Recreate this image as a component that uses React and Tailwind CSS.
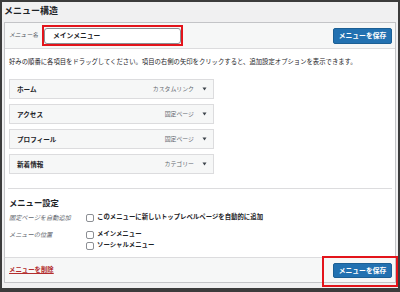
import React from 'react';

const items = [
  { label: 'ホーム', type: 'カスタムリンク' },
  { label: 'アクセス', type: '固定ページ' },
  { label: 'プロフィール', type: '固定ページ' },
  { label: '新着情報', type: 'カテゴリー' },
];

function Arrow() {
  return (
    <svg width="5" height="4" viewBox="0 0 5 4" className="shrink-0">
      <path d="M0.5 0.5 L4.5 0.5 L2.5 3.5 Z" fill="#3c434a" />
    </svg>
  );
}

function Check({ label }) {
  return (
    <label className="flex items-center gap-[3px] h-[11px]">
      <span className="w-[8px] h-[8px] rounded-[2px] border border-[#8c8f94] bg-white shrink-0" />
      <span className="text-[6.4px] font-bold text-[#1d2327] leading-none">{label}</span>
    </label>
  );
}

export default function App() {
  return (
    <div
      className="relative w-[400px] h-[292px] bg-[#f0f0f1] border-2 border-b-[4px] border-[#3c3c3c] flex flex-col"
      style={{ fontFamily: '"Noto Sans CJK JP", "Noto Sans", sans-serif' }}
    >
      {/* header */}
      <div className="h-[16px] flex items-center px-[2px] shrink-0">
        <h2 className="text-[9px] font-bold text-[#1d2327] leading-none">メニュー構造</h2>
      </div>

      <div className="mt-[4px] mx-[2px] mb-[5px] flex-1 flex flex-col border border-[#c3c4c7] bg-white">
        {/* menu name bar */}
        <div className="h-[26px] shrink-0 flex items-center justify-between bg-[#f6f7f7] border-b border-[#dcdcde] pl-[4px] pr-[3px]">
          <div className="flex items-center gap-[6px]">
            <span className="text-[5.8px] italic text-[#50575e]">メニュー名</span>
            <div className="relative w-[137px] h-[16px] rounded-[3px] border border-[#8c8f94] bg-white flex items-center px-[8px]">
              <span className="text-[6.8px] font-bold text-[#1d2327] leading-none">メインメニュー</span>
              <span className="absolute -left-[3px] -right-[3px] -top-[4px] -bottom-[3px] border-2 border-[#e3141b]" />
            </div>
          </div>
          <button className="w-[59px] h-[16px] rounded-[2px] bg-[#2271b1] border border-[#1c5f94] text-white text-[6.8px] font-bold leading-none">
            メニューを保存
          </button>
        </div>

        {/* body */}
        <div className="flex-1 flex flex-col pl-[4px] pr-[3px] pt-[9px]">
          <p className="text-[6.35px] leading-[8px] text-[#1d2327] whitespace-nowrap">
            好みの順番に各項目をドラッグしてください。項目の右側の矢印をクリックすると、追加設定オプションを表示できます。
          </p>

          <ul className="mt-[13px] w-[205px] flex flex-col gap-[5px]">
            {items.map((it) => (
              <li
                key={it.label}
                className="h-[20px] flex items-center justify-between bg-[#f6f7f7] border border-[#dcdcde] pl-[7px] pr-[6px]"
              >
                <span className="text-[6.6px] font-bold text-[#1d2327] leading-none">{it.label}</span>
                <span className="flex items-center gap-[8px]">
                  <span className="text-[5.9px] text-[#646970] leading-none">{it.type}</span>
                  <Arrow />
                </span>
              </li>
            ))}
          </ul>

          <div className="mt-[14px] -ml-[1px] h-px bg-[#dcdcde]" />

          <h3 className="mt-[9px] text-[8.3px] font-bold text-[#1d2327] leading-[9px]">メニュー設定</h3>

          <div className="mt-[5px] grid grid-cols-[77px_1fr] gap-y-[6px]">
            <span className="text-[6.2px] italic text-[#646970] leading-[11px]">固定ページを自動追加</span>
            <Check label="このメニューに新しいトップレベルページを自動的に追加" />
            <span className="text-[6.2px] italic text-[#646970] leading-[11px]">メニューの位置</span>
            <div className="flex flex-col">
              <Check label="メインメニュー" />
              <Check label="ソーシャルメニュー" />
            </div>
          </div>
        </div>

        {/* footer */}
        <div className="h-[25px] shrink-0 flex items-center justify-between bg-[#f6f7f7] border-t border-[#dcdcde] pl-[4px] pr-[3px]">
          <a className="text-[6.4px] font-bold text-[#b32d2e] underline leading-none">メニューを削除</a>
          <button className="w-[59px] h-[15px] rounded-[2px] bg-[#2271b1] border border-[#1c5f94] text-white text-[6.8px] font-bold leading-none">
            メニューを保存
          </button>
        </div>
      </div>

      {/* highlight around footer save button */}
      <div className="absolute left-[320px] top-[254px] w-[76px] h-[31px] border-2 border-[#e3141b]" />
    </div>
  );
}
